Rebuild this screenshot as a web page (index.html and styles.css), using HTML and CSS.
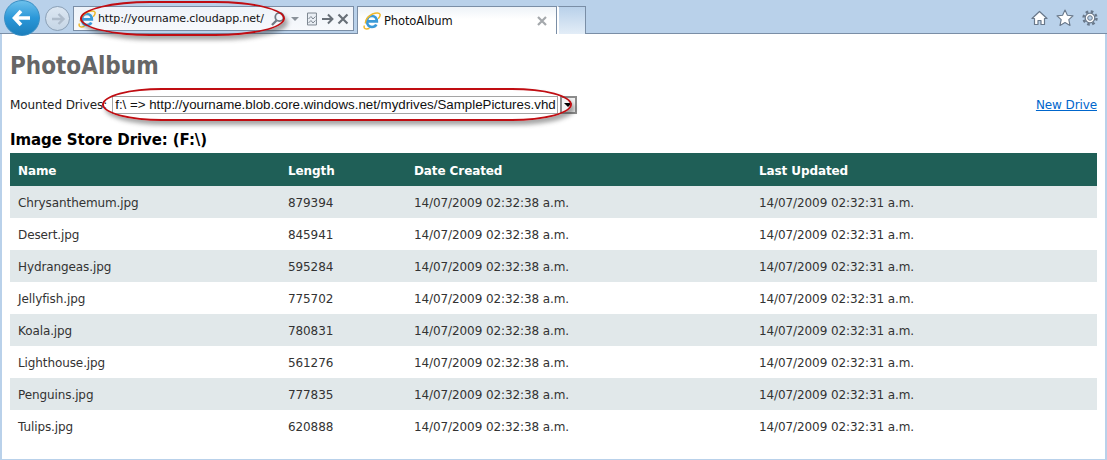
FILE: index.html
```html
<!DOCTYPE html>
<html>
<head>
    <meta charset="utf-8">
    <title>PhotoAlbum</title>
    <link rel="stylesheet" href="styles.css">
</head>
<body>
    <svg class="defs" width="0" height="0">
        <symbol id="ie" viewBox="0 0 18 18">
            <path d="M4.500 9.300h9.300c0-3.100-2.100-5.300-4.800-5.300s-5 2.300-5 5.600 2.200 5.400 5 5.400c2 0 3.500-.8 4.300-2.500" fill="none" stroke="#3b9ad8" stroke-width="2.700"/>
            <path d="M2.500 11.500C2 8 5 4 9.500 2c3.500-1.500 6.800-1.500 7.500.3.500 1.300-.5 3-1.800 4.500" fill="none" stroke="#f0b92c" stroke-width="1.500"/>
            <path d="M1.500 13.500c-1.500 3 1.500 4.300 5 2.700" fill="none" stroke="#f0b92c" stroke-width="1.500"/>
        </symbol>
    </svg>

    <div class="chrome">
        <div class="back">
            <svg width="20" height="18" viewBox="0 0 20 18"><path d="M9 2 2.500 9 9 16M3 9h15" fill="none" stroke="#fff" stroke-width="3.600"/></svg>
        </div>
        <div class="forward">
            <svg width="16" height="14" viewBox="0 0 16 14"><path d="M8.500 2 13.500 7l-5 5M13 7H2" fill="none" stroke="#aebccb" stroke-width="2.400"/></svg>
        </div>
        <div class="address">
            <svg class="ie-icon" width="18" height="18"><use href="#ie"/></svg>
            <span class="url">http://yourname.cloudapp.net/</span>
            <svg class="tool" width="16" height="16" viewBox="0 0 16 16"><circle cx="9.500" cy="6" r="4.200" fill="none" stroke="#707a84" stroke-width="1.800"/><path d="M6.500 9.500 2 14" stroke="#707a84" stroke-width="2.400"/></svg>
            <span class="caret"></span>
            <svg class="tool" width="12" height="14" viewBox="0 0 12 14"><path d="M1.500 1h9v12h-9z" fill="#e9eef4" stroke="#7d8791"/><path d="M2.500 7 5 4.500 7 7l2.500-2.500M2.500 11 5 8.500 7 11l2.500-2.500" fill="none" stroke="#7d8791"/></svg>
            <svg class="tool" width="13" height="12" viewBox="0 0 13 12"><path d="M7 1.500 11.500 6 7 10.500M11 6H1" fill="none" stroke="#687078" stroke-width="2"/></svg>
            <svg class="tool" width="12" height="12" viewBox="0 0 12 12"><path d="M1.500 1.500l9 9M10.500 1.500l-9 9" stroke="#687078" stroke-width="2.200"/></svg>
        </div>
        <div class="tab">
            <svg class="ie-icon" width="18" height="18"><use href="#ie"/></svg>
            <span class="tab-title">PhotoAlbum</span>
            <svg width="10" height="10" viewBox="0 0 10 10"><path d="M1 1l8 8M9 1 1 9" stroke="#a4a8ac" stroke-width="2.200"/></svg>
        </div>
        <div class="new-tab"></div>
        <div class="tools">
            <svg width="17" height="16" viewBox="0 0 17 16"><path d="M8.500 1.500 1 8.500h2.500v6h3.500v-4h3v4h3.500v-6H16z" fill="#fff" stroke="#69788a" stroke-width="1.200" stroke-linejoin="round"/></svg>
            <svg width="18" height="17" viewBox="0 0 18 17"><path d="M9 1l2.400 5.300 5.600.6-4.200 3.800 1.200 5.700L9 13.500l-5 2.900 1.200-5.700L1 6.900l5.600-.6z" fill="#fff" stroke="#69788a" stroke-width="1.100" stroke-linejoin="round"/></svg>
            <svg width="16" height="16" viewBox="0 0 16 16"><circle cx="8" cy="8" r="4.800" fill="#fff" stroke="#69788a" stroke-width="1.200"/><circle cx="8" cy="8" r="2.300" fill="#b9d1ea" stroke="#69788a"/><circle cx="8" cy="8" r="6.500" fill="none" stroke="#69788a" stroke-width="2.400" stroke-dasharray="2.600 2.500"/></svg>
        </div>
        <div class="mark mark-url"></div>
    </div>

    <div class="page">
        <h1>PhotoAlbum</h1>
        <div class="drive-bar">
            <label>Mounted Drives:</label>
            <div class="drive-select">
                <span class="drive-value">f:\ =&gt; http://yourname.blob.core.windows.net/mydrives/SamplePictures.vhd</span>
                <span class="drive-arrow"></span>
            </div>
            <a href="#">New Drive</a>
            <div class="mark mark-drive"></div>
        </div>
        <h2>Image Store Drive: (F:\)</h2>
        <table>
            <thead>
                <tr><th class="col-name">Name</th><th class="col-length">Length</th><th class="col-date">Date Created</th><th>Last Updated</th></tr>
            </thead>
            <tbody>
                <tr><td>Chrysanthemum.jpg</td><td>879394</td><td>14/07/2009 02:32:38 a.m.</td><td>14/07/2009 02:32:31 a.m.</td></tr>
                <tr><td>Desert.jpg</td><td>845941</td><td>14/07/2009 02:32:38 a.m.</td><td>14/07/2009 02:32:31 a.m.</td></tr>
                <tr><td>Hydrangeas.jpg</td><td>595284</td><td>14/07/2009 02:32:38 a.m.</td><td>14/07/2009 02:32:31 a.m.</td></tr>
                <tr><td>Jellyfish.jpg</td><td>775702</td><td>14/07/2009 02:32:38 a.m.</td><td>14/07/2009 02:32:31 a.m.</td></tr>
                <tr><td>Koala.jpg</td><td>780831</td><td>14/07/2009 02:32:38 a.m.</td><td>14/07/2009 02:32:31 a.m.</td></tr>
                <tr><td>Lighthouse.jpg</td><td>561276</td><td>14/07/2009 02:32:38 a.m.</td><td>14/07/2009 02:32:31 a.m.</td></tr>
                <tr><td>Penguins.jpg</td><td>777835</td><td>14/07/2009 02:32:38 a.m.</td><td>14/07/2009 02:32:31 a.m.</td></tr>
                <tr><td>Tulips.jpg</td><td>620888</td><td>14/07/2009 02:32:38 a.m.</td><td>14/07/2009 02:32:31 a.m.</td></tr>
            </tbody>
        </table>
    </div>
</body>
</html>
```

FILE: styles.css
```css
* {
    box-sizing: border-box;
}

html, body {
    height: 100%;
}

body {
    margin: 0;
    overflow: hidden;
    background-color: #b9d1ea;
    font-family: 'DejaVu Sans', Verdana, sans-serif;
    font-size: 12px;
    letter-spacing: -0.1px;
    color: #222;
}

.defs {
    position: absolute;
}

.chrome {
    position: relative;
    display: flex;
    align-items: flex-start;
    height: 34px;
    padding: 6px 0 0 73px;
    background-color: #b9d1ea;
    border-bottom: 1px solid #7a8ea6;
}

.back {
    position: absolute;
    left: 4px;
    top: 0;
    width: 36px;
    height: 36px;
    display: flex;
    align-items: center;
    justify-content: center;
    border-radius: 50%;
    border: 1px solid #3a8fc4;
    background: linear-gradient(#6cc0ec, #2a97d8 50%, #1c7fbc);
}

.forward {
    position: absolute;
    left: 45px;
    top: 6px;
    width: 25px;
    height: 25px;
    display: flex;
    align-items: center;
    justify-content: center;
    border-radius: 50%;
    border: 1px solid #8ba0b6;
    background: linear-gradient(#dce7f2, #c6d6e6);
}

.address {
    display: flex;
    align-items: center;
    width: 281px;
    height: 25px;
    padding: 0 4px;
    border: 1px solid #7a8ea6;
    background: linear-gradient(#eef3f9, #f7f9fc);
}

.address .tool {
    margin-left: 3px;
}

.ie-icon {
    flex: none;
}

.url {
    width: 170px;
    margin-left: 2px;
    font-size: 11px;
    color: #111;
    white-space: nowrap;
}

.caret {
    width: 0;
    height: 0;
    margin: 0 4px 0 5px;
    border-left: 4px solid transparent;
    border-right: 4px solid transparent;
    border-top: 4px solid #8a929a;
}

.tab {
    display: flex;
    align-items: center;
    width: 200px;
    height: 28px;
    margin-left: 3px;
    padding: 0 9px 0 5px;
    border: 1px solid #7a8ea6;
    border-bottom: none;
    background: linear-gradient(#eef3f8, #fff 45%);
}

.tab-title {
    flex: 1;
    margin-left: 3px;
    font-size: 11.500px;
    color: #111;
}

.new-tab {
    width: 29px;
    height: 28px;
    border: 1px solid #7a8ea6;
    border-left: 2px solid #fff;
    border-bottom: none;
    background: linear-gradient(#b9d1ea, #e3edf7);
}

.tools {
    display: flex;
    align-items: center;
    gap: 8px;
    margin-left: auto;
    margin-right: 9px;
    height: 23px;
}

.mark {
    position: absolute;
    border: 2px solid #c00d12;
    box-shadow: 3px 4px 4px rgba(60, 60, 60, 0.45);
}

.mark-url {
    left: 80px;
    top: 1px;
    width: 205px;
    height: 35px;
    border-radius: 70px / 50%;
}

.page {
    height: 425px;
    margin: 0 2px;
    padding: 18px 8px 0;
    background-color: #fff;
}

h1 {
    margin: 0 0 16px;
    font-family: 'DejaVu Sans Condensed', 'DejaVu Sans', sans-serif;
    font-stretch: condensed;
    font-size: 24px;
    line-height: 28px;
    font-weight: bold;
    letter-spacing: 0;
    color: #666;
}

.drive-bar {
    position: relative;
    display: flex;
    align-items: center;
    height: 18px;
}

.drive-select {
    display: flex;
    align-items: center;
    margin-left: 5px;
    height: 18px;
}

.drive-value {
    display: block;
    width: 446px;
    height: 18px;
    padding-left: 2px;
    border: 1px solid #a5a5a5;
    font-family: 'Liberation Sans', Arial, sans-serif;
    font-size: 13.300px;
    letter-spacing: 0;
    line-height: 16px;
    color: #111;
    white-space: nowrap;
}

.drive-arrow {
    position: relative;
    width: 17px;
    height: 18px;
    margin-left: 2px;
    border: 2px solid #8c8c8c;
    background-color: #f2f2f2;
}

.drive-arrow::after {
    content: "";
    position: absolute;
    left: 2px;
    top: 5px;
    border-left: 4px solid transparent;
    border-right: 4px solid transparent;
    border-top: 4px solid #000;
}

.drive-bar a {
    margin-left: auto;
    color: #0066cc;
}

.mark-drive {
    left: 92px;
    top: -8px;
    width: 470px;
    height: 33px;
    border-radius: 60px / 50%;
}

h2 {
    margin: 16px 0 3px;
    font-size: 15px;
    line-height: 20px;
    font-weight: bold;
    color: #000;
}

table {
    width: 100%;
    border-collapse: collapse;
    table-layout: fixed;
}

th, td {
    padding: 2px 8px 0;
    text-align: left;
}

th {
    height: 33px;
    background-color: #1f5f57;
    color: #fff;
    font-weight: bold;
}

td {
    height: 32px;
    color: #333;
}

tbody tr:nth-child(odd) {
    background-color: #e1e8ea;
}

.col-name {
    width: 270px;
}

.col-length {
    width: 126px;
}

.col-date {
    width: 345px;
}
```
